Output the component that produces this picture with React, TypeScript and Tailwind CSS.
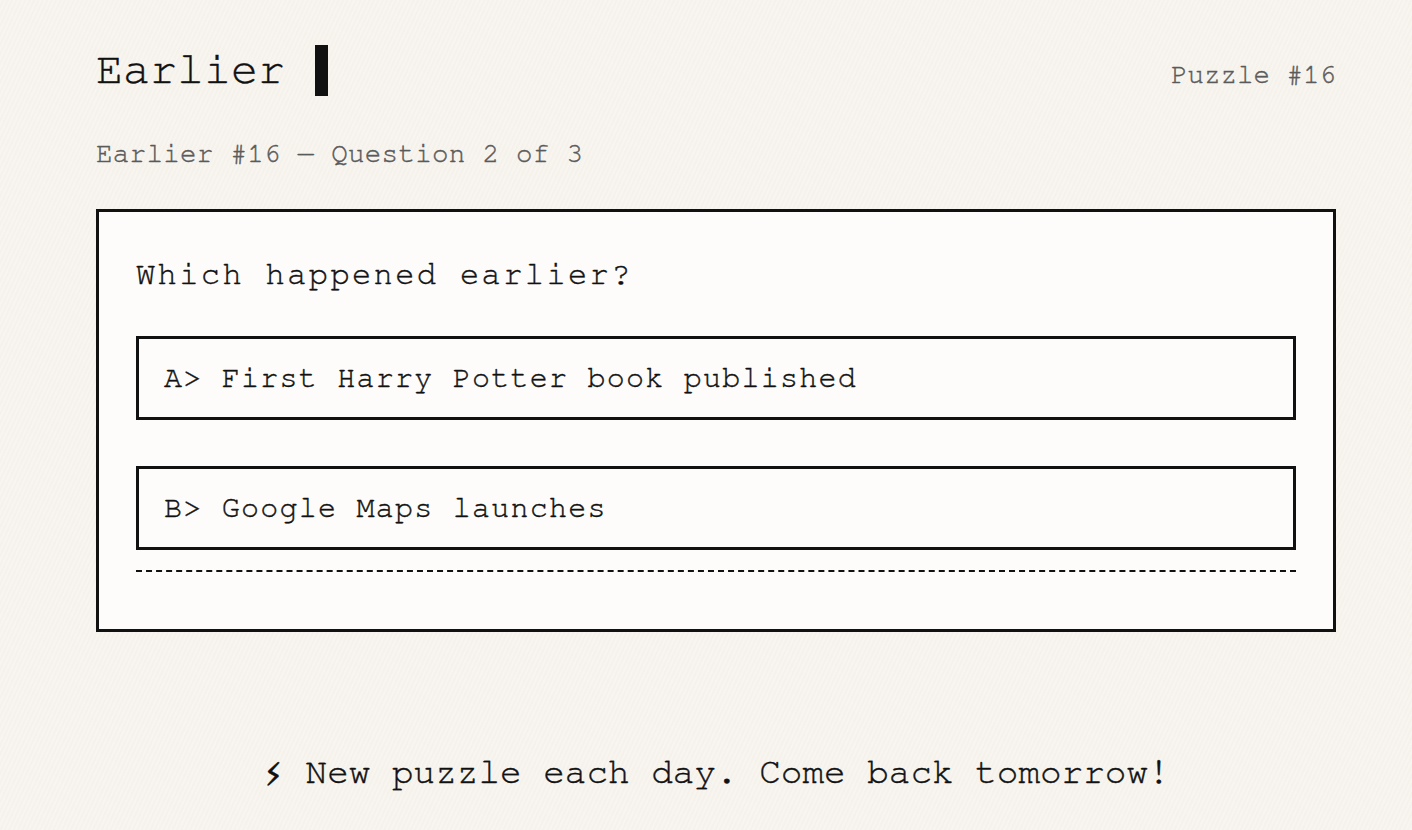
const mono = "font-['FreeMono','Nimbus_Mono_PS','Courier','Liberation_Mono',monospace]";

const options = [
  { key: 'A', label: 'First Harry Potter book published' },
  { key: 'B', label: 'Google Maps launches' },
];

export default function App() {
  return (
    <div
      className={`${mono} min-h-[830px] bg-[#f7f4ef] bg-[repeating-linear-gradient(115deg,#f8f5f1_0px,#f8f5f1_2px,#f5f2ec_2px,#f5f2ec_4px)] pl-[96px] pr-[76px] pt-[40px] text-[#111] [-webkit-text-stroke:0.4px]`}
    >
      <header className="flex items-baseline justify-between">
        <h1 className="flex items-center gap-[30px] text-[45px] leading-[60px] font-normal">
          Earlier
          <span className="inline-block h-[51px] w-[13px] bg-[#111]" />
        </h1>
        <span className="text-[27.5px] text-[#5a5a5a]">Puzzle #16</span>
      </header>

      <p className="mt-[36px] text-[27.5px] leading-[36px] tracking-[0.3px] text-[#5a5a5a]">
        Earlier #16 — Question 2 of 3
      </p>

      <section className="mt-[37px] border-[3px] border-[#111] bg-[#fdfcfa] px-[37px] pt-[42px] pb-[57px]">
        <h2 className="text-[32px] leading-[40px] tracking-[2.4px]">Which happened earlier?</h2>

        <div className="mt-[42px] flex flex-col gap-[46px]">
          {options.map((o) => (
            <button
              key={o.key}
              type="button"
              className="flex h-[84px] items-center border-[3px] border-[#111] bg-transparent px-[25px] text-left text-[30px] tracking-[1.25px]"
            >
              {o.key}&gt; {o.label}
            </button>
          ))}
        </div>

        <div className="mt-[20px] border-t-2 border-dashed border-[#111]" />
      </section>

      <footer className="mt-[113px] text-center text-[36px]">⚡ New puzzle each day. Come back tomorrow!</footer>
    </div>
  );
}
